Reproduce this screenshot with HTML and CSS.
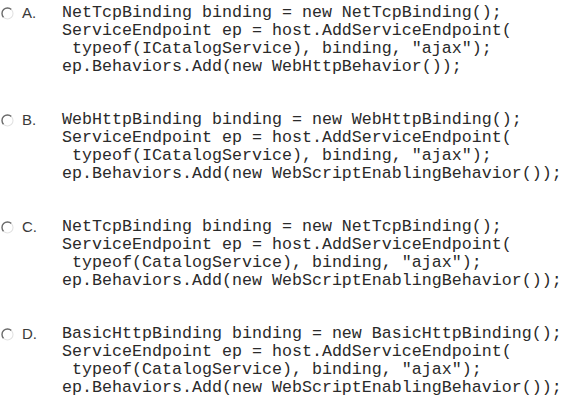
FILE: index.html
```html
<!DOCTYPE html>
<html>
<head>
<meta charset="utf-8">
<link rel="stylesheet" href="styles.css">
</head>
<body>
<div class="options">
  <div class="option">
    <svg class="radio" width="13" height="13" viewBox="0 0 13 13"><path d="M10.4 2.6A5.5 5.5 0 0 0 2.6 10.4" fill="none" stroke="#6a6a6a" stroke-width="1.4"/><path d="M10.4 2.6A5.5 5.5 0 0 1 2.6 10.4" fill="none" stroke="#e2e2e2" stroke-width="1.1"/></svg>
    <span class="label">A.</span>
    <pre class="code">NetTcpBinding binding = new NetTcpBinding();
ServiceEndpoint ep = host.AddServiceEndpoint(
 typeof(ICatalogService), binding, "ajax");
ep.Behaviors.Add(new WebHttpBehavior());</pre>
  </div>
  <div class="option">
    <svg class="radio" width="13" height="13" viewBox="0 0 13 13"><path d="M10.4 2.6A5.5 5.5 0 0 0 2.6 10.4" fill="none" stroke="#6a6a6a" stroke-width="1.4"/><path d="M10.4 2.6A5.5 5.5 0 0 1 2.6 10.4" fill="none" stroke="#e2e2e2" stroke-width="1.1"/></svg>
    <span class="label">B.</span>
    <pre class="code">WebHttpBinding binding = new WebHttpBinding();
ServiceEndpoint ep = host.AddServiceEndpoint(
 typeof(ICatalogService), binding, "ajax");
ep.Behaviors.Add(new WebScriptEnablingBehavior());</pre>
  </div>
  <div class="option">
    <svg class="radio" width="13" height="13" viewBox="0 0 13 13"><path d="M10.4 2.6A5.5 5.5 0 0 0 2.6 10.4" fill="none" stroke="#6a6a6a" stroke-width="1.4"/><path d="M10.4 2.6A5.5 5.5 0 0 1 2.6 10.4" fill="none" stroke="#e2e2e2" stroke-width="1.1"/></svg>
    <span class="label">C.</span>
    <pre class="code">NetTcpBinding binding = new NetTcpBinding();
ServiceEndpoint ep = host.AddServiceEndpoint(
 typeof(CatalogService), binding, "ajax");
ep.Behaviors.Add(new WebScriptEnablingBehavior());</pre>
  </div>
  <div class="option">
    <svg class="radio" width="13" height="13" viewBox="0 0 13 13"><path d="M10.4 2.6A5.5 5.5 0 0 0 2.6 10.4" fill="none" stroke="#6a6a6a" stroke-width="1.4"/><path d="M10.4 2.6A5.5 5.5 0 0 1 2.6 10.4" fill="none" stroke="#e2e2e2" stroke-width="1.1"/></svg>
    <span class="label">D.</span>
    <pre class="code">BasicHttpBinding binding = new BasicHttpBinding();
ServiceEndpoint ep = host.AddServiceEndpoint(
 typeof(CatalogService), binding, "ajax");
ep.Behaviors.Add(new WebScriptEnablingBehavior());</pre>
  </div>
</div>
</body>
</html>
```
FILE: styles.css
```css
html, body {
  margin: 0;
  padding: 0;
  background: #fff;
}
body {
  overflow: hidden;
}
.options {
  display: flex;
  flex-direction: column;
  gap: 35px;
  padding-top: 4px;
}
.option {
  display: grid;
  grid-template-columns: 1px 13px 8px 40px auto;
  align-items: start;
}
.radio {
  grid-column: 2;
  margin-top: 3px;
}
.label {
  grid-column: 4;
  font-family: "Liberation Sans", Arial, sans-serif;
  font-size: 15px;
  line-height: 18px;
  color: #3a3a3a;
}
.code {
  grid-column: 5;
  margin: 0;
  font-family: "Liberation Mono", "Courier New", monospace;
  font-size: 16.67px;
  line-height: 18px;
  color: #2a2a2a;
  white-space: pre;
}
```
